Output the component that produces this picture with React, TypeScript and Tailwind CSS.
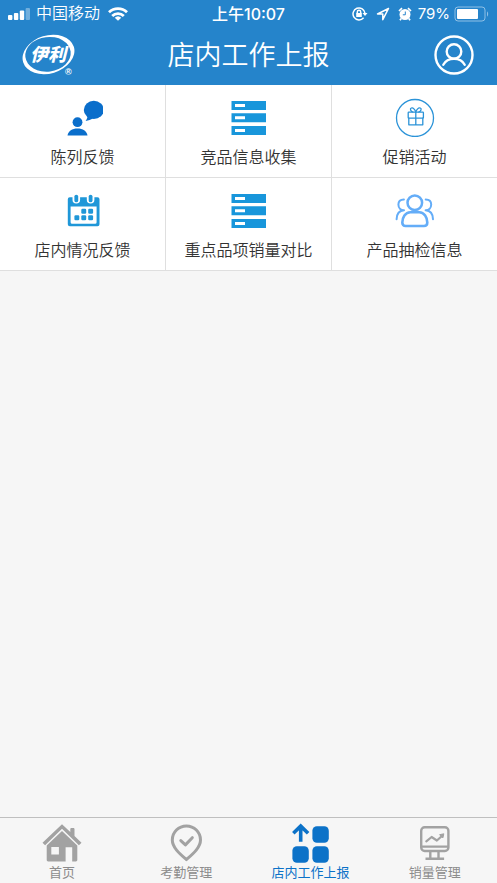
import type { ReactNode } from 'react';

interface Entry {
    label: string;
    icon: ReactNode;
}

function IconBox({ children }: { children: ReactNode }) {
    return (
        <svg viewBox="0 0 40 40" className="size-10" fill="none" aria-hidden="true">
            {children}
        </svg>
    );
}

function FeedbackIcon() {
    return (
        <IconBox>
            <g fill="#0a6ecb">
                <ellipse cx="30.8" cy="12.9" rx="10" ry="9.1" />
                <path d="M24.500 17.500c.2 2.500-.4 4.600-1.900 6.600 3-.7 5.200-1.400 7.400-2.800z" />
                <circle cx="14.500" cy="25.200" r="4.900" />
                <path d="M4.500 38.600c.9-4.800 4.600-7 10-7s9.100 2.200 10 7z" />
            </g>
        </IconBox>
    );
}

function ServerIcon() {
    return (
        <IconBox>
            <path
                fill="#1896db"
                fillRule="evenodd"
                d="M2.500 4H37v9H2.500zM6 7v3h10V7zM2.500 16.300H37v9H2.500zM6 19.300v3h10v-3zM2.500 29H37v9H2.500zM6 32v3h10v-3z"
            />
        </IconBox>
    );
}

function GiftIcon() {
    return (
        <IconBox>
            <g stroke="#2b93d8" strokeWidth="1.300" strokeLinejoin="round" strokeLinecap="round">
                <circle cx="20" cy="21" r="18.500" />
                <rect x="13.200" y="15.200" width="15.200" height="6" rx=".6" />
                <path d="M13.800 21.200v6.600h14v-6.600M20.800 15.200v12.600" />
                <path d="M20.800 15c-1.300-3.200-3-4.500-4.500-4-1.600.7-.8 3.300 1.500 4M20.800 15c1.300-3.200 3-4.500 4.500-4 1.600.7.8 3.300-1.500 4" />
            </g>
        </IconBox>
    );
}

function CalendarIcon() {
    return (
        <IconBox>
            <path
                fill="#1f97d8"
                fillRule="evenodd"
                d="M6.800 7.300h2.700v2.500a3.800 3.800 0 0 0 7.600 0V7.300h6.700v2.500a3.800 3.800 0 0 0 7.600 0V7.300h3.100a2 2 0 0 1 2 2v25a2 2 0 0 1-2 2H6.800a2 2 0 0 1-2-2v-25a2 2 0 0 1 2-2zM7.600 16.400v15.800a1.500 1.500 0 0 0 1.500 1.500h23a1.500 1.500 0 0 0 1.500-1.500V16.400z"
            />
            <g fill="#1f97d8">
                <rect x="11.400" y="4.700" width="3.800" height="7.600" rx="1.900" />
                <rect x="25.700" y="4.700" width="3.800" height="7.600" rx="1.900" />
                <rect x="18.300" y="18.800" width="4.900" height="4.900" rx="1.200" />
                <rect x="25.200" y="18.800" width="4.900" height="4.900" rx="1.200" />
                <rect x="11.400" y="25.300" width="4.900" height="4.900" rx="1.200" />
                <rect x="18.300" y="25.300" width="4.900" height="4.900" rx="1.200" />
                <rect x="25.200" y="25.300" width="4.900" height="4.900" rx="1.200" />
            </g>
        </IconBox>
    );
}

function PeopleIcon() {
    return (
        <IconBox>
            <g stroke="#64adf8" strokeLinecap="round" strokeLinejoin="round">
                <circle cx="19.800" cy="12.700" r="7.300" strokeWidth="2.500" />
                <path
                    strokeWidth="2.600"
                    d="M15.300 22.200h9c5 0 8 5.300 8 10.300 0 2.300-1.200 3.500-3.300 3.500H10.600c-2.100 0-3.300-1.200-3.300-3.500 0-5 3-10.300 8-10.300z"
                />
                <path strokeWidth="2" d="M8.900 9.600c-3.700.1-5.500 2.300-5.500 5 0 3.400 2.400 5.700 5.600 5.700C4.500 20.600 1.700 24 1.600 29.300" />
                <path strokeWidth="2" d="M30.700 9.600c3.700.1 5.500 2.300 5.500 5 0 3.400-2.400 5.700-5.600 5.700 4.500.3 7.300 3.700 7.400 9" />
            </g>
        </IconBox>
    );
}

function HomeIcon() {
    return (
        <IconBox>
            <g fill="#a2a2a2">
                <path d="M20 1.200 28.300 9V6.200c0-.7.500-1.200 1.200-1.200h1.800c.7 0 1.200.5 1.200 1.200V13l7 6.700-2.600 2.500L20 5.800 3.100 22.200.5 19.700z" />
                <path
                    fillRule="evenodd"
                    d="M20 8 35.300 22.500V37c0 .8-.6 1.400-1.400 1.400h-3.700V24.200h-6.600v14.200H6.100c-.8 0-1.400-.6-1.400-1.400V22.500zM9.300 24v7.500h7.600V24z"
                />
            </g>
        </IconBox>
    );
}

function CheckPinIcon() {
    return (
        <IconBox>
            <g stroke="#a2a2a2" strokeWidth="3" strokeLinecap="round" strokeLinejoin="round">
                <path d="M20.400 36.600C13.800 30.800 6.300 24.500 6.300 17a14.100 14.100 0 0 1 28.200 0c0 7.500-7.500 13.800-14.100 19.600z" />
                <path d="m14.800 17.600 4.600 4.300 6.900-7.200" />
            </g>
        </IconBox>
    );
}

function ReportIcon() {
    return (
        <IconBox>
            <g fill="#0c72c8">
                <rect x="21.400" y="3.300" width="16.400" height="16.400" rx="4.500" />
                <rect x="1.400" y="23.300" width="16.400" height="16.400" rx="4.500" />
                <rect x="21.400" y="23.300" width="16.400" height="16.400" rx="4.500" />
            </g>
            <path stroke="#0c72c8" strokeWidth="3.600" d="M9.700 18.700V3.500M2.300 10.300l7.400-7.200 7.400 7.200" />
        </IconBox>
    );
}

function SalesIcon() {
    return (
        <IconBox>
            <g stroke="#a2a2a2" strokeWidth="2.400">
                <rect x="6.200" y="4.200" width="27.200" height="23.800" rx="3.500" />
                <path d="M6.200 23.600h27.200M15.300 28v7.500M23.500 28v7.500M10.500 35.800h18.600" />
                <path d="m11.300 18.300 5.300-4.300 5.300 3.500 5.600-5" strokeWidth="2.200" strokeLinecap="round" strokeLinejoin="round" />
                <path d="m28.800 10.800-1 4.200-3.200-3.300z" fill="#a2a2a2" strokeWidth="1" />
            </g>
        </IconBox>
    );
}

function YiliLogo() {
    return (
        <svg viewBox="0 0 54 42" className="h-[42px] w-[54px]" role="img" aria-label="伊利">
            <ellipse cx="26.500" cy="20.500" rx="26.500" ry="19" fill="#fff" transform="rotate(-17 26.500 20.500)" />
            <ellipse cx="26" cy="20.300" rx="22.800" ry="17.300" fill="#2584cb" transform="rotate(-7 26 20.300)" />
            <text
                x="26"
                y="27"
                textAnchor="middle"
                fill="#fff"
                fontSize="18"
                fontWeight="900"
                fontStyle="italic"
                fontFamily="'Noto Sans CJK SC', sans-serif"
            >
                伊利
            </text>
            <text x="43" y="41" fill="#fff" fontSize="9" fontWeight="700" fontFamily="'Liberation Sans', sans-serif">
                ®
            </text>
        </svg>
    );
}

function StatusBar() {
    return (
        <div className="grid h-7 grid-cols-[1fr_auto_1fr] items-center px-2">
            <div className="flex items-center">
                <svg viewBox="0 0 22 12" className="mr-1.5 h-3 w-[22px]" fill="#fff" aria-hidden="true">
                    <rect x="0" y="7" width="4.400" height="5" rx="1" />
                    <rect x="5.900" y="5" width="4.400" height="7" rx="1" />
                    <rect x="11.800" y="2.500" width="4.400" height="9.500" rx="1" />
                    <rect x="17.600" y="0" width="4.400" height="12" rx="1" opacity=".35" />
                </svg>
                <span className="text-base font-[350]">中国移动</span>
                <svg viewBox="0 0 20 14" className="ml-2 h-3.5 w-5" fill="none" stroke="#fff" strokeWidth="2.800" aria-hidden="true">
                    <path d="M1 5.200a13 13 0 0 1 18 0M4.200 8.900a8.300 8.300 0 0 1 11.600 0" />
                    <path d="M10 13.700 6.700 10.700a4.800 4.800 0 0 1 6.600 0z" fill="#fff" stroke="none" />
                </svg>
            </div>
            <span className="text-base font-medium">
                上午<span className="font-['Inter']">10:07</span>
            </span>
            <div className="flex items-center justify-end">
                <svg viewBox="0 0 16 14" className="h-3.5 w-4" fill="none" stroke="#fff" strokeWidth="1.500" aria-hidden="true">
                    <path d="M11.600 10.800A6 6 0 1 1 13 6.300" />
                    <path d="M10.500 6h5L13 9z" fill="#fff" stroke="none" />
                    <rect x="4.200" y="6" width="5.600" height="4" fill="#fff" stroke="none" />
                    <path d="M5.300 6.500V5a1.700 1.700 0 0 1 3.400 0v1.500" />
                </svg>
                <svg viewBox="0 0 14 14" className="ml-2 h-3.5 w-3.5" fill="none" stroke="#fff" strokeWidth="1.500" strokeLinejoin="round" aria-hidden="true">
                    <path d="M12.500 1.500 1.500 7h5.300v5.700z" />
                </svg>
                <svg viewBox="0 0 14 14" className="ml-2 h-3.5 w-3.5" aria-hidden="true">
                    <circle cx="7" cy="7.500" r="5.500" fill="#fff" />
                    <path d="M1 4 4 1.200M13 4l-3-2.800M3.200 11.500 2 13.300M10.800 11.500l1.200 1.800" stroke="#fff" strokeWidth="1.700" />
                    <path d="M7.300 4.500v3.300H4.800" fill="none" stroke="#2584cb" strokeWidth="1" />
                </svg>
                <span className="ml-1.5 font-['Inter'] text-[15px]">79%</span>
                <svg viewBox="0 0 35 16" className="ml-1 h-4 w-[35px]" aria-hidden="true">
                    <rect x="1" y="1" width="30" height="14" rx="3" fill="none" stroke="#8fc0e6" />
                    <rect x="3" y="3" width="21" height="10" rx="1" fill="#fff" />
                    <path d="M33 5.500c1.500.5 1.500 4.500 0 5z" fill="#8fc0e6" />
                </svg>
            </div>
        </div>
    );
}

const entries: Entry[] = [
    { label: '陈列反馈', icon: <FeedbackIcon /> },
    { label: '竞品信息收集', icon: <ServerIcon /> },
    { label: '促销活动', icon: <GiftIcon /> },
    { label: '店内情况反馈', icon: <CalendarIcon /> },
    { label: '重点品项销量对比', icon: <ServerIcon /> },
    { label: '产品抽检信息', icon: <PeopleIcon /> },
];

const tabs: Entry[] = [
    { label: '首页', icon: <HomeIcon /> },
    { label: '考勤管理', icon: <CheckPinIcon /> },
    { label: '店内工作上报', icon: <ReportIcon /> },
    { label: '销量管理', icon: <SalesIcon /> },
];

const activeTab = '店内工作上报';

export default function App() {
    return (
        <div className="flex min-h-screen flex-col bg-[#f6f6f6] font-['Liberation_Sans','Noto_Sans_CJK_SC',sans-serif]">
            <header className="bg-[#2584cb] text-white">
                <StatusBar />
                <div className="grid h-[57px] grid-cols-[1fr_auto_1fr] items-center px-[22px] pb-1">
                    <YiliLogo />
                    <h1 className="pt-0.5 text-[27px] leading-9 font-[350]">店内工作上报</h1>
                    <button type="button" aria-label="个人中心" className="justify-self-end">
                        <svg viewBox="0 0 42 42" className="size-[42px]" fill="none" stroke="#fff" strokeWidth="2.400" aria-hidden="true">
                            <circle cx="21" cy="21" r="18.500" />
                            <circle cx="21" cy="17.500" r="7.300" />
                            <path d="M10.300 30.800c2-3.700 5.800-6 10.700-6s8.700 2.300 10.700 6" strokeLinecap="round" />
                        </svg>
                    </button>
                </div>
            </header>

            <main className="flex-1">
                <div className="grid grid-cols-3 gap-px border-b border-[#dfdfdf] bg-[#dfdfdf]">
                    {entries.map((entry) => (
                        <button key={entry.label} type="button" className="flex flex-col items-center bg-white pt-3 pb-[7px]">
                            {entry.icon}
                            <span className="mt-[9px] text-base font-[350] whitespace-nowrap text-[#333]">{entry.label}</span>
                        </button>
                    ))}
                </div>
            </main>

            <nav className="grid grid-cols-4 border-t border-[#bfbfbf]">
                {tabs.map((tab) => (
                    <a
                        key={tab.label}
                        href="#"
                        aria-current={tab.label === activeTab ? 'page' : undefined}
                        className={`flex flex-col items-center pt-[5px] text-[13px] leading-5 ${tab.label === activeTab ? 'text-[#0c72c8]' : 'text-[#8c8c8c]'}`}
                    >
                        {tab.icon}
                        {tab.label}
                    </a>
                ))}
            </nav>
        </div>
    );
}
